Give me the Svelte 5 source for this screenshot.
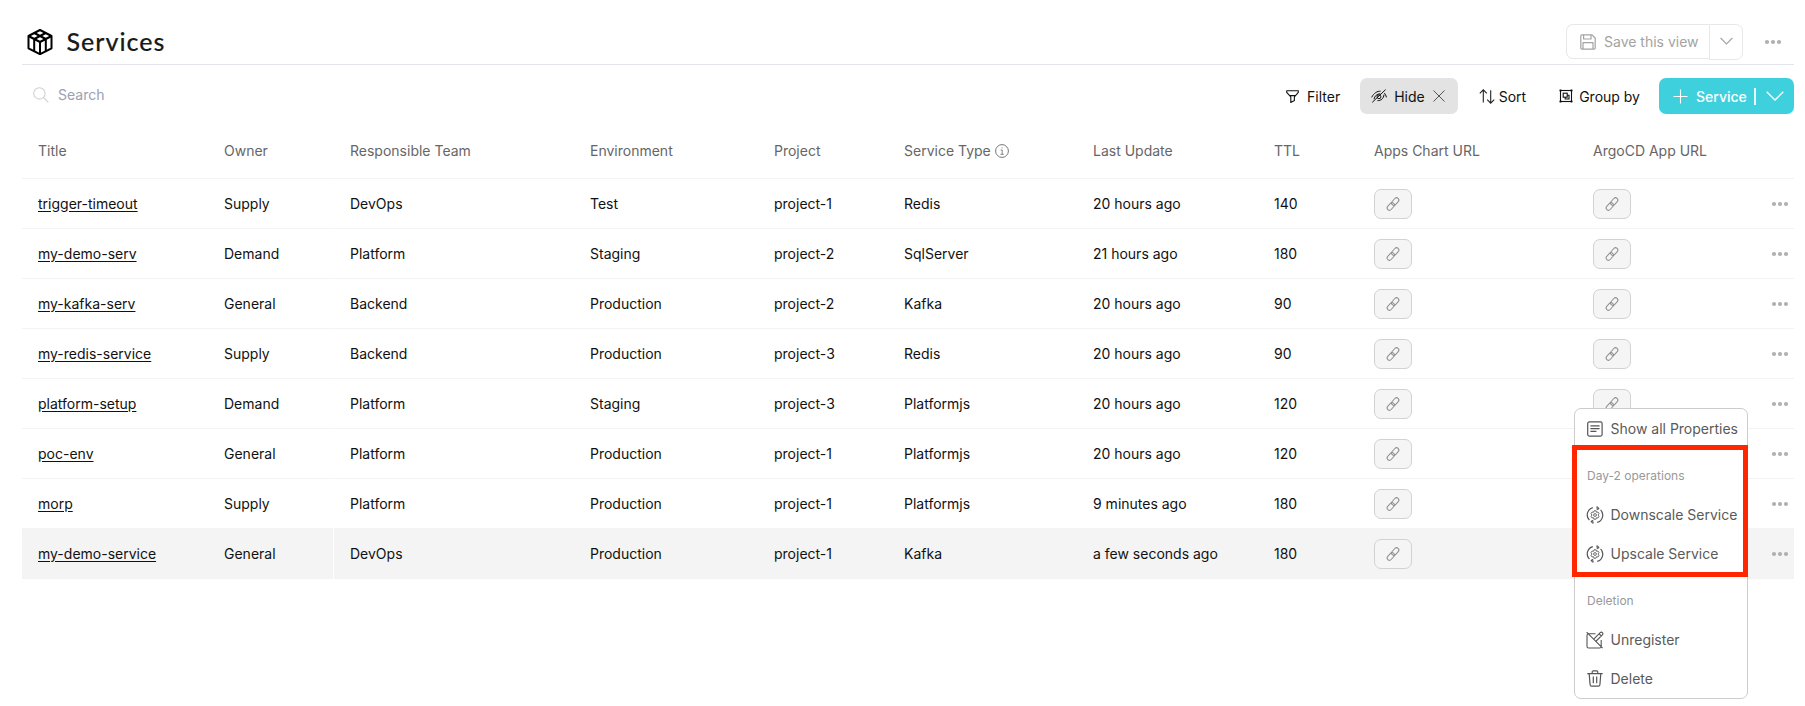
<script>
  const columns = [
    'Title', 'Owner', 'Responsible Team', 'Environment', 'Project',
    'Service Type', 'Last Update', 'TTL', 'Apps Chart URL', 'ArgoCD App URL'
  ];
  const rows = [
    ['trigger-timeout', 'Supply', 'DevOps', 'Test', 'project-1', 'Redis', '20 hours ago', '140'],
    ['my-demo-serv', 'Demand', 'Platform', 'Staging', 'project-2', 'SqlServer', '21 hours ago', '180'],
    ['my-kafka-serv', 'General', 'Backend', 'Production', 'project-2', 'Kafka', '20 hours ago', '90'],
    ['my-redis-service', 'Supply', 'Backend', 'Production', 'project-3', 'Redis', '20 hours ago', '90'],
    ['platform-setup', 'Demand', 'Platform', 'Staging', 'project-3', 'Platformjs', '20 hours ago', '120'],
    ['poc-env', 'General', 'Platform', 'Production', 'project-1', 'Platformjs', '20 hours ago', '120'],
    ['morp', 'Supply', 'Platform', 'Production', 'project-1', 'Platformjs', '9 minutes ago', '180'],
    ['my-demo-service', 'General', 'DevOps', 'Production', 'project-1', 'Kafka', 'a few seconds ago', '180']
  ];
  const active = 7;
</script>

{#snippet dots()}
  <svg class="dots" width="18" height="6" viewBox="0 0 18 6" fill="#b0b0b0">
    <circle cx="3" cy="3" r="2.1" /><circle cx="9" cy="3" r="2.1" /><circle cx="15" cy="3" r="2.1" />
  </svg>
{/snippet}

{#snippet link()}
  <span class="link">
    <svg width="16" height="16" viewBox="0 0 16 16" fill="none" stroke="#8f8f8f" stroke-width="1">
      <g transform="rotate(-48 8 8)">
        <rect x="0.4" y="5.7" width="8.6" height="4.6" rx="2.3" />
        <rect x="7" y="5.7" width="8.6" height="4.6" rx="2.3" />
      </g>
    </svg>
  </span>
{/snippet}

{#snippet scaleIcon()}
  <svg width="18" height="18" viewBox="0 0 18 18" fill="none" stroke="#555" stroke-width="1.2">
    <path d="M6.8 1.6A7.6 7.6 0 0 0 3.4 14.2M5 15.4L7.6 16.4M10.4 1.6L13 2.6M14.6 3.8A7.6 7.6 0 0 1 11.2 16.4" />
    <path d="M10.8.2L13 2.7L10.6 3.8M7.2 17.8L5 15.3L7.4 14.2" stroke-width="1" />
    <path d="M8 4.8H10L10.5 6.3L12 6L13 7.7L12 9L13 10.3L12 12L10.5 11.7L10 13.2H8L7.5 11.7L6 12L5 10.3L6 9L5 7.7L6 6L7.5 6.3Z" stroke-width=".85" />
    <circle cx="9" cy="9" r="1.4" stroke-width=".85" />
  </svg>
{/snippet}

<main>
  <header>
    <svg class="cube" width="26" height="26" viewBox="0 0 26 26" fill="none" stroke="#000" stroke-width="2" stroke-linejoin="round">
      <path d="M13 1L24.5 7V19.3L13 25.2L1.5 19.3V7Z" />
      <path d="M1.5 7L13 13L24.5 7M13 13V25M7.3 4L18.8 10V22.3M18.7 4L7.2 10V22.3" />
    </svg>
    <h1>Services</h1>
    <div class="save">
      <span class="main-part">
        <svg width="16" height="16" viewBox="0 0 16 16" fill="none" stroke="#a3a3a3" stroke-width="1.2" stroke-linejoin="round">
          <path d="M.8 2Q.8.8 2 .8H12L15.2 4V14Q15.2 15.2 14 15.2H2Q.8 15.2.8 14ZM3.6 1V5H11V1M3 15V8.6H13V15" />
        </svg>
        <span>Save this view</span>
      </span>
      <span class="drop">
        <svg width="13" height="8" viewBox="0 0 13 8" fill="none" stroke="#a3a3a3" stroke-width="1.1"><path d="M.6 1L6.5 7L12.4 1" /></svg>
      </span>
    </div>
    {@render dots()}
  </header>

  <div class="toolbar">
    <div class="search">
      <svg width="16" height="16" viewBox="0 0 16 16" fill="none" stroke="#d2d2d2" stroke-width="1.1"><circle cx="6.4" cy="6.4" r="5.7" /><path d="M10.5 10.5L15.3 15.3" /></svg>
      <span>Search</span>
    </div>
    <div class="tool filter">
      <svg width="13" height="13" viewBox="0 0 13 13" fill="none" stroke="#111" stroke-width="1.1" stroke-linejoin="round"><path d="M.7.8H12.3V2.4L8.4 6.8V10.5L4.8 12.4V6.8L.7 2.4Z M3.8 5.6H9.3" /></svg>
      <span>Filter</span>
    </div>
    <div class="tool hide">
      <svg width="16" height="14" viewBox="0 0 16 14" fill="none" stroke="#111" stroke-width="1">
        <path d="M.6 8.4C3 4 6.2 2 9.6 2.2M13.2 4C14.2 5 15 6.4 15.4 8.4M3 10.2C3.6 7 6 4.8 9.2 4.8M6.4 11.6C10 11.8 12.6 9.6 13 5.6M1.2 13.4L14.6.6" />
        <circle cx="8" cy="7.8" r="1.9" />
      </svg>
      <span>Hide</span>
      <svg class="close" width="12" height="12" viewBox="0 0 12 12" fill="none" stroke="#555" stroke-width="1"><path d="M.5.5L11.5 11.5M11.5.5L.5 11.5" /></svg>
    </div>
    <div class="tool sort">
      <svg width="16" height="15" viewBox="0 0 16 15" fill="none" stroke="#222" stroke-width="1.1"><path d="M.8 4.4L4.3.9L7.8 4.4M4.3 1V13.6M8.2 10.6L11.7 14.1L15.2 10.6M11.7 14V1.2" /></svg>
      <span>Sort</span>
    </div>
    <div class="tool group">
      <svg width="14" height="14" viewBox="0 0 14 14" fill="none" stroke="#111" stroke-width="1.1"><rect x="1.5" y="1.5" width="11" height="11" /><rect x="4.2" y="4.2" width="4" height="4" /><path d="M8.2 6.2H10V10H6.2V8.2" /><path d="M.5 1.5H2.5M1.5.5V2.5M11.5 1.5H13.5M12.5.5V2.5M.5 12.5H2.5M1.5 11.5V13.5M11.5 12.5H13.5M12.5 11.5V13.5" stroke-width="1.4" /></svg>
      <span>Group by</span>
    </div>
    <div class="add">
      <svg width="15" height="15" viewBox="0 0 15 15" stroke="#fff" stroke-width="1.1"><path d="M7.5 .5V14.5M.5 7.5H14.5" /></svg>
      <span>Service</span>
      <i></i>
      <svg width="18" height="10" viewBox="0 0 18 10" fill="none" stroke="#fff" stroke-width="1.3"><path d="M.7.8L9 9L17.3.8" /></svg>
    </div>
  </div>

  <div class="table">
    <div class="row head">
      {#each columns as column}
        <div class="cell">
          {column}
          {#if column === 'Service Type'}
            <svg class="info" width="14" height="14" viewBox="0 0 14 14" fill="none" stroke="#777" stroke-width="1"><circle cx="7" cy="7" r="6.4" /><path d="M5.6 6H7.2V10.2M5.4 10.3H8.8M6.6 3.9H7.6" stroke-width=".9" /></svg>
          {/if}
        </div>
      {/each}
    </div>
    {#each rows as row, i}
      <div class="row" class:active={i === active}>
        {#each row as value, c}
          <div class="cell">{#if c === 0}<a href="#top">{value}</a>{:else}{value}{/if}</div>
        {/each}
        <div class="cell">{@render link()}</div>
        <div class="cell last">{@render link()}{@render dots()}</div>
      </div>
    {/each}
  </div>

  <div class="menu">
    <div class="item first">
      <svg width="16" height="16" viewBox="0 0 16 16" fill="none" stroke="#555" stroke-width="1.2"><rect x=".7" y=".9" width="14.4" height="14.2" rx="1.5" /><path d="M3.4 4.8H12.6M3.4 7.6H12.6M3.4 10.4H9.4" /></svg>
      <span>Show all Properties</span>
    </div>
    <div class="ops">
      <div class="label">Day-2 operations</div>
      <div class="item">{@render scaleIcon()}<span>Downscale Service</span></div>
      <div class="item">{@render scaleIcon()}<span>Upscale Service</span></div>
    </div>
    <div class="label">Deletion</div>
    <div class="item">
      <svg width="18" height="18" viewBox="0 0 18 18" fill="none" stroke="#555" stroke-width="1.1"><path d="M9.5 2.8H2.6Q1 2.8 1 4.4V15.4Q1 17 2.6 17H13.6Q15.2 17 15.2 15.4V9M.6 1.2L16.6 17.2M8 7.9L14.2 1.7Q15.3.7 16.4 1.7Q17.4 2.8 16.4 3.8L10.2 10M13.2 2.9L15.3 5" /></svg>
      <span>Unregister</span>
    </div>
    <div class="item">
      <svg width="16" height="17" viewBox="0 0 16 17" fill="none" stroke="#555" stroke-width="1.2"><path d="M.3 3.6H15.7M5.2 3.4V2Q5.2.9 6.3.9H9.7Q10.8.9 10.8 2V3.4M2.2 3.8L3.1 14.8Q3.2 16.2 4.6 16.2H11.4Q12.8 16.2 12.9 14.8L13.8 3.8M6.3 6.6V13.2M9.7 6.6V13.2" /></svg>
      <span>Delete</span>
    </div>
    <div class="outline"></div>
  </div>
</main>

<style>
  :global(body) { background: #fff; overflow: hidden; }
  main {
    position: relative;
    box-sizing: border-box;
    width: 1805px;
    height: 706px;
    padding: 0 11px 0 22px;
    font: 14px/20px Inter, sans-serif;
    color: #111;
  }
  svg { flex: none; display: block; }
  header {
    box-sizing: border-box;
    height: 65px;
    padding: 20px 12px 0 5px;
    border-bottom: 1px solid #e3e3ea;
    display: flex;
    align-items: center;
  }
  h1 {
    margin: 0 auto 0 13.5px;
    padding-bottom: 2px;
    font: 500 25px/32px Lato, sans-serif;
    letter-spacing: 1px;
    -webkit-text-stroke: 0.15px #1a1a1a;
    color: #1a1a1a;
  }
  .save { display: flex; color: #a3a3a3; margin-right: 21px; }
  .main-part, .drop {
    box-sizing: border-box;
    height: 35px;
    border: 1px solid #e8e8e8;
    display: flex;
    align-items: center;
  }
  .main-part { width: 143px; padding-left: 13px; gap: 8px; border-right: 0; border-radius: 7px 0 0 7px; }
  .drop { width: 34px; height: 36px; justify-content: center; border-radius: 0 7px 7px 0; }
  .drop svg { margin-bottom: 2px; }
  .toolbar { height: 62px; margin-bottom: 1px; display: flex; align-items: center; }
  .search { display: flex; align-items: center; gap: 9px; margin: -2px auto 0 11px; color: #9aa1b0; }
  .tool { display: flex; align-items: center; }
  .tool span, .add span { padding-top: 2px; }
  .filter { gap: 8px; margin-right: 20px; }
  .hide { box-sizing: border-box; width: 98px; height: 36px; padding-left: 11px; gap: 7px; background: #e3e3e3; border-radius: 7px; margin-right: 20.5px; }
  .close { margin-left: 1px; }
  .sort { gap: 4px; margin-right: 33px; }
  .group { gap: 6px; margin-right: 19px; }
  .add { box-sizing: border-box; width: 135px; height: 36px; padding-left: 14px; display: flex; align-items: center; background: #3fd0de; color: #fff; border-radius: 7px; font-weight: 500; }
  .add span { margin: 0 7px 0 8px; }
  .add i { width: 2px; height: 17px; background: #fff; opacity: 0.85; margin-right: 10px; }
  .row {
    display: grid;
    grid-template-columns: 186px 126px 240px 184px 130px 189px 181px 100px 219px 217px;
    height: 50px;
  }
  .row.head { height: 51px; color: #666; }
  .cell {
    box-sizing: border-box;
    padding-left: 16px;
    border-bottom: 1px solid #f3f3f3;
    display: flex;
    align-items: center;
    white-space: nowrap;
  }
  .cell:nth-child(2) { margin-right: 1px; }
  .head .cell { padding-bottom: 5px; }
  .active .cell { background: #f4f4f4; }
  .info { margin-left: 4px; }
  a { color: inherit; text-decoration: underline; text-underline-offset: 2px; }
  .link {
    box-sizing: border-box;
    width: 38px;
    height: 30px;
    display: flex;
    align-items: center;
    justify-content: center;
    border: 1px solid #d2d2d2;
    border-radius: 7px;
    background: #f5f5f5;
  }
  .last { justify-content: space-between; padding-right: 5px; }
  .menu {
    position: absolute;
    left: 1574px;
    top: 408px;
    box-sizing: border-box;
    width: 174px;
    height: 291px;
    padding: 1px 0 0 12px;
    border: 1px solid #ccc;
    border-radius: 7px;
    background: #fff;
    color: #5a5a5a;
    white-space: nowrap;
  }
  .item { display: flex; align-items: center; height: 39px; }
  .item svg { width: 18px; margin-right: 7px; margin-left: -1.5px; }
  .first { height: 38px; }
  .label { height: 47px; line-height: 55px; font-size: 12px; color: #999; }
  .outline {
    position: absolute;
    left: -3px;
    top: 36px;
    box-sizing: border-box;
    width: 176px;
    height: 132px;
    border: 5px solid #ff2600;
  }
</style>
